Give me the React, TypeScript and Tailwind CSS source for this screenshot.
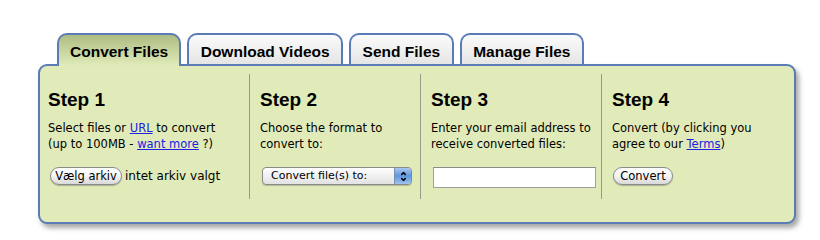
import { ChevronDown, ChevronUp } from "lucide-react";

const tabs = ["Convert Files", "Download Videos", "Send Files", "Manage Files"];

const PillButton = ({ label, w }: { label: string; w: string }) => (
  <button
    className={`${w} h-[18px] rounded-full border border-[#8a8a8a] bg-gradient-to-b from-white via-[#f4f4f4] to-[#d9d9d9] text-[11.5px] leading-[16px] text-black shadow-[0_1px_1px_rgba(0,0,0,0.25)]`}
  >
    {label}
  </button>
);

export default function App() {
  return (
    <div className="w-[820px] h-[240px] bg-white pt-[33px] pl-[38px] font-['DejaVu_Sans',sans-serif] text-black">
      <div className="flex items-end gap-[6px] pl-[19px] relative z-10">
        {tabs.map((t, i) => (
          <div
            key={t}
            className={
              i === 0
                ? "h-[33px] -mb-[2px] px-[11px] pt-[7px] border-2 border-b-0 border-[#5b7bb6] rounded-t-[10px] bg-gradient-to-b from-[#aebd83] to-[#e0ebb9] font-['Liberation_Sans',sans-serif] font-bold text-[15.5px] leading-[20px]"
                : "h-[31px] px-[11.5px] pt-[7px] border-2 border-b-0 border-[#5b7bb6] rounded-t-[10px] bg-gradient-to-b from-[#fbfbfb] to-[#e5e5e5] font-['Liberation_Sans',sans-serif] font-bold text-[15.5px] leading-[20px]"
            }
          >
            {t}
          </div>
        ))}
      </div>
      <div className="w-[758px] h-[160px] border-2 border-[#5b7bb6] rounded-[9px] bg-[#e0ebb9] shadow-[3px_4px_5px_rgba(0,0,0,0.35)] flex pt-[8px] text-[11.5px] leading-[16px]">
        <div className="w-[210px] h-[125px] border-r border-[#9a9a8a] pl-[8px]">
          <h2 className="mt-[15px] font-['Liberation_Sans',sans-serif] font-bold text-[19px] leading-[22px]">Step 1</h2>
          <p className="mt-[9px]">
            Select files or <a className="text-[#2020e6] underline">URL</a> to convert
            <br />
            (up to 100MB - <a className="text-[#2020e6] underline">want more</a> ?)
          </p>
          <div className="mt-[15px] flex items-center gap-[3px] pl-[2px]">
            <PillButton label="Vælg arkiv" w="w-[72px]" />
            <span className="text-[12px]">intet arkiv valgt</span>
          </div>
        </div>
        <div className="w-[171px] h-[125px] border-r border-[#9a9a8a] pl-[10px]">
          <h2 className="mt-[15px] font-['Liberation_Sans',sans-serif] font-bold text-[19px] leading-[22px]">Step 2</h2>
          <p className="mt-[9px]">
            Choose the format to
            <br />
            convert to:
          </p>
          <div className="mt-[15px] ml-[2px] w-[150px] h-[18px] flex rounded-[4px] border border-[#8a8a8a] bg-gradient-to-b from-white to-[#e2e2e2] shadow-[0_1px_1px_rgba(0,0,0,0.2)] overflow-hidden">
            <span className="flex-1 pl-[8px] text-[11px] leading-[16px]">Convert file(s) to:</span>
            <span className="w-[17px] flex flex-col items-center justify-center bg-gradient-to-b from-[#a9c8f0] via-[#5f96dc] to-[#9ec3f0] border-l border-[#7a8fb0]">
              <ChevronUp size={7} strokeWidth={5} className="-mb-[1px]" />
              <ChevronDown size={7} strokeWidth={5} />
            </span>
          </div>
        </div>
        <div className="w-[181px] h-[125px] border-r border-[#9a9a8a] pl-[10px]">
          <h2 className="mt-[15px] font-['Liberation_Sans',sans-serif] font-bold text-[19px] leading-[22px]">Step 3</h2>
          <p className="mt-[9px]">
            Enter your email address to
            <br />
            receive converted files:
          </p>
          <input
            type="text"
            className="mt-[15px] ml-[2px] w-[163px] h-[21px] bg-white border border-[#a0a0a0] border-t-[#8a8a8a] outline-none"
          />
        </div>
        <div className="flex-1 h-[125px] pl-[10px]">
          <h2 className="mt-[15px] font-['Liberation_Sans',sans-serif] font-bold text-[19px] leading-[22px]">Step 4</h2>
          <p className="mt-[9px]">
            Convert (by clicking you
            <br />
            agree to our <a className="text-[#2020e6] underline">Terms</a>)
          </p>
          <div className="mt-[15px] pl-[1px]">
            <PillButton label="Convert" w="w-[60px]" />
          </div>
        </div>
      </div>
    </div>
  );
}
